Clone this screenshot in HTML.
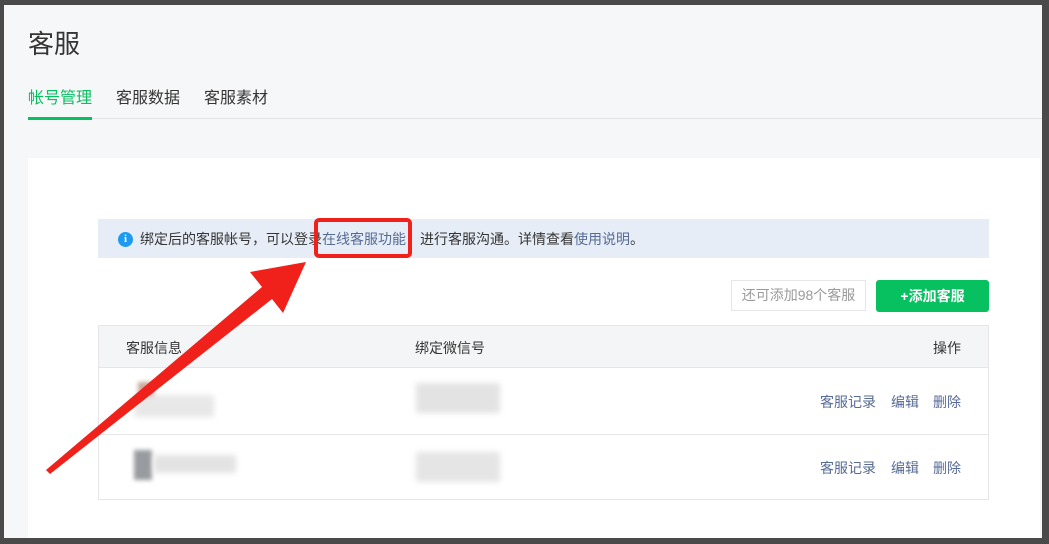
<!DOCTYPE html>
<html><head><meta charset="utf-8"><style>
*{margin:0;padding:0;box-sizing:border-box}
body{width:1049px;height:544px;overflow:hidden;background:#4a4a4a;font-family:"Liberation Sans","Noto Sans CJK SC",sans-serif;position:relative}
.page{position:absolute;left:4px;top:5px;width:1038px;height:533px;background:#f6f7f9;overflow:hidden}
.a{position:absolute}
.t{color:#353535}
.link{color:#576b95}
</style></head><body>
<div class="page">
 <div class="a t" style="left:24px;top:22px;font-size:26px;line-height:34px">客服</div>
 <div class="a" style="left:24px;top:83px;font-size:16px;line-height:22px;color:#07c160">帐号管理</div>
 <div class="a t" style="left:112px;top:83px;font-size:16px;line-height:22px">客服数据</div>
 <div class="a t" style="left:200px;top:83px;font-size:16px;line-height:22px">客服素材</div>
 <div class="a" style="left:24px;top:113px;width:1014px;height:1px;background:#e0e2e5"></div>
 <div class="a" style="left:24px;top:112px;width:64px;height:3px;background:#07c160"></div>
 <div class="a" style="left:24px;top:153px;width:1012px;height:400px;background:#fff"></div>
 <div class="a" style="left:94px;top:214px;width:891px;height:39px;background:#e6edf7"></div>
 <div class="a" style="left:114px;top:227px;width:15px;height:15px;border-radius:50%;background:#1e9bf0;color:#fff;font-size:11px;line-height:15px;text-align:center;font-weight:bold;font-family:'Liberation Serif',serif">i</div>
 <div class="a" style="left:136px;top:224px;font-size:14px;line-height:20px;color:#353535;white-space:nowrap">绑定后的客服帐号，可以登录<span class="link">在线客服功能</span>，进行客服沟通。详情查看<span class="link">使用说明</span>。</div>
 <div class="a" style="left:727px;top:275px;width:135px;height:31px;border:1px solid #e4e6e9;font-size:14px;line-height:29px;text-align:center;color:#9a9a9a">还可添加98个客服</div>
 <div class="a" style="left:872px;top:275px;width:113px;height:32px;border-radius:3px;background:#07c160;color:#fff;font-size:14px;font-weight:bold;line-height:32px;text-align:center">+添加客服</div>
 <div class="a" style="left:94px;top:320px;width:891px;height:175px;border:1px solid #e4e6e9"></div>
 <div class="a" style="left:95px;top:321px;width:889px;height:42px;background:#f4f5f7;border-bottom:1px solid #e4e6e9"></div>
 <div class="a t" style="left:122px;top:333px;font-size:14px;line-height:20px">客服信息</div>
 <div class="a t" style="left:411px;top:333px;font-size:14px;line-height:20px">绑定微信号</div>
 <div class="a t" style="left:929px;top:333px;font-size:14px;line-height:20px">操作</div>
 <div class="a" style="left:95px;top:429px;width:889px;height:1px;background:#e4e6e9"></div>
 <div class="a link" style="left:816px;top:387px;font-size:14px;line-height:20px">客服记录</div>
 <div class="a link" style="left:887px;top:387px;font-size:14px;line-height:20px">编辑</div>
 <div class="a link" style="left:929px;top:387px;font-size:14px;line-height:20px">删除</div>
 <div class="a link" style="left:816px;top:453px;font-size:14px;line-height:20px">客服记录</div>
 <div class="a link" style="left:887px;top:453px;font-size:14px;line-height:20px">编辑</div>
 <div class="a link" style="left:929px;top:453px;font-size:14px;line-height:20px">删除</div>
 <!-- blurred placeholders -->
 <div class="a" style="left:134px;top:377px;width:16px;height:20px;background:#c9a79a;filter:blur(2px)"></div>
 <div class="a" style="left:130px;top:390px;width:80px;height:22px;background:#e8e8e8;filter:blur(3px)"></div>
 <div class="a" style="left:412px;top:378px;width:84px;height:30px;background:#e3e3e3;filter:blur(3px)"></div>
 <div class="a" style="left:130px;top:445px;width:18px;height:30px;background:#9a9ba0;filter:blur(2px)"></div>
 <div class="a" style="left:150px;top:450px;width:82px;height:18px;background:#e3e3e3;filter:blur(3px)"></div>
 <div class="a" style="left:412px;top:447px;width:84px;height:30px;background:#e5e5e5;filter:blur(3px)"></div>
</div>
<svg class="a" style="left:0;top:0" width="1049" height="544">
 <rect x="316" y="220" width="94" height="36" rx="3" fill="none" stroke="#f0201a" stroke-width="4"/>
 <polygon points="46,470 262,287 250,272 306,262 283,313 272,299 50,474" fill="#f0201a"/>
</svg>
</body></html>
